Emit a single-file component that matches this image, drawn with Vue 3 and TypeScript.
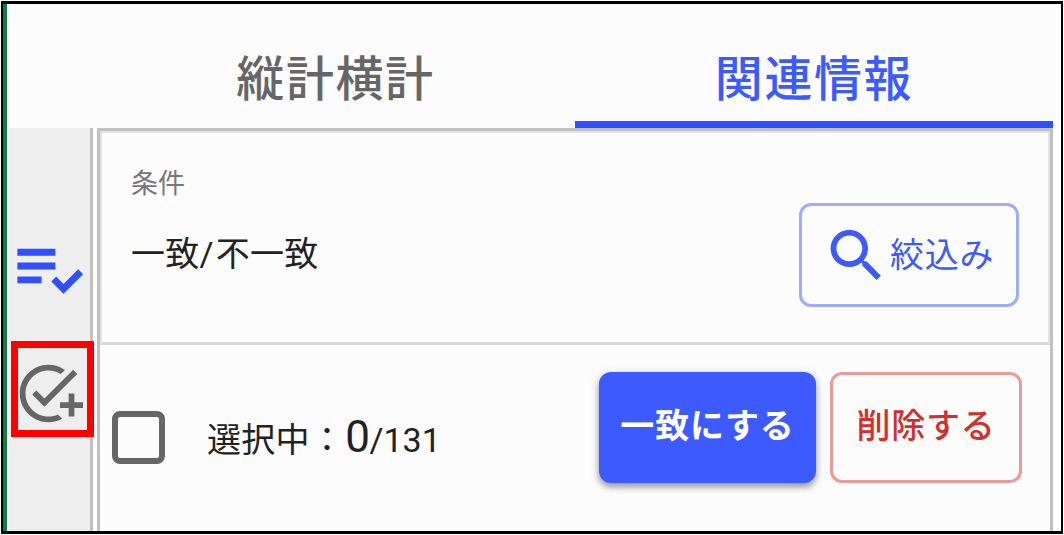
<template>
  <div class="window">
    <div class="tabs">
      <div
        v-for="(tab, index) in tabs"
        :key="index"
        class="tab"
        :class="{ active: index === activeTab }"
        @click="activeTab = index"
      >
        {{ tab }}
      </div>
    </div>

    <div class="content">
      <div class="sidebar">
        <svg class="list-icon" viewBox="0 0 24 24">
          <path d="M3 10h11v2H3zm0-4h11v2H3zm0 8h7v2H3zm17.59-2.07-4.25 4.24-2.12-2.12-1.41 1.41L16.34 19 22 13.34z" />
        </svg>
        <div class="task">
          <svg class="task-icon" viewBox="0 0 24 24">
            <path d="M22 5.18 10.59 16.6l-4.24-4.24 1.41-1.41 2.83 2.83 10-10L22 5.18zM12 20c-4.41 0-8-3.59-8-8s3.59-8 8-8c1.57 0 3.04.46 4.28 1.25l1.45-1.45C16.1 2.67 14.13 2 12 2 6.48 2 2 6.48 2 12s4.48 10 10 10c1.73 0 3.36-.44 4.78-1.22l-1.5-1.5c-1 .46-2.11.72-3.28.72zm7-5h-3v2h3v3h2v-3h3v-2h-3v-3h-2v3z" />
          </svg>
          <div class="marker"></div>
        </div>
      </div>

      <div class="panel">
        <div class="filter">
          <div class="condition">
            <div class="label">条件</div>
            <div class="value">一致<span class="slash">/</span>不一致</div>
          </div>
          <button class="btn search">
            <svg class="search-icon" viewBox="0 0 24 24">
              <path d="M15.5 14h-.79l-.28-.27C15.41 12.59 16 11.11 16 9.5 16 5.91 13.09 3 9.5 3S3 5.91 3 9.5 5.91 16 9.5 16c1.61 0 3.09-.59 4.23-1.57l.27.28v.79l5 4.99L20.49 19l-4.99-5zm-6 0C7.01 14 5 11.99 5 9.5S7.01 5 9.5 5 14 7.01 14 9.5 11.99 14 9.5 14z" />
            </svg>
            <span>絞込み</span>
          </button>
        </div>

        <div class="actions">
          <div class="checkbox" :class="{ checked: allChecked }" @click="allChecked = !allChecked"></div>
          <div class="count">選択中：<span class="selected">{{ selected }}</span><span class="total">/{{ total }}</span></div>
          <button class="btn match">一致にする</button>
          <button class="btn delete">削除する</button>
        </div>
      </div>
    </div>
  </div>
</template>

<script setup lang="ts">
import { ref, computed } from 'vue'

const tabs = ['縦計横計', '関連情報']
const activeTab = ref(1)
const total = 131
const allChecked = ref(false)

const selected = computed(() => (allChecked.value ? total : 0))
</script>

<style>
body {
  margin: 0;
  background: #fff;
}
</style>

<style scoped>
.window {
  box-sizing: border-box;
  display: flex;
  flex-direction: column;
  width: 1062px;
  height: 533px;
  margin: 1px;
  border: 3px solid #000;
  border-width: 3px 2px 3px 2px;
  background: linear-gradient(to right, #107c41 4px, #fff 4px);
  font-family: Roboto, 'Noto Sans CJK JP', sans-serif;
  color: #222;
  overflow: hidden;
}
.tabs {
  display: flex;
  flex: none;
  height: 124px;
  margin-left: 5px;
  margin-right: 8px;
  background: #fcfcfc;
  box-shadow: 8px 0 0 #fcfcfc;
}
.tab {
  box-sizing: border-box;
  width: 567px;
  padding-left: 88px;
  padding-top: 6px;
  text-align: center;
  font-size: 48px;
  font-weight: 500;
  line-height: 140px;
  letter-spacing: 1.6px;
  color: #666;
  cursor: pointer;
}
.tab.active {
  width: 478px;
  padding-left: 0;
  flex: none;
  color: #3d5afe;
  border-bottom: 7px solid #304ffe;
}
.content {
  display: flex;
  flex: 1;
  min-height: 0;
  margin-left: 6px;
}
.sidebar {
  box-sizing: border-box;
  width: 84px;
  border-right: 3px solid #c0c0c0;
  background: #eee;
}
.list-icon {
  display: block;
  width: 83px;
  height: 83px;
  margin: 99.5px 0 0 -2px;
  fill: #304ffe;
}
.task {
  position: relative;
  margin-top: 48px;
}
.task-icon {
  display: block;
  width: 69px;
  height: 69px;
  margin-left: 4.5px;
  fill: #666;
}
/* highlight frame drawn over the sidebar edge */
.marker {
  position: absolute;
  box-sizing: border-box;
  left: 2px;
  top: -17.5px;
  width: 83px;
  height: 96px;
  border: 7px solid #f00;
}
.panel {
  box-sizing: border-box;
  width: 956px;
  margin-left: 4px;
  border: 3px solid #c0c0c0;
  border-bottom: none;
  background: #fcfcfc;
}
.filter {
  box-sizing: border-box;
  display: flex;
  justify-content: space-between;
  height: 214px;
  padding: 70px 29px 0 29px;
  border: 2px solid #e2e2e2;
  border-bottom: 3px solid #d9d9d9;
}
.condition {
  margin-top: -37px;
}
.label {
  font-size: 27px;
  line-height: 36px;
  color: #777;
}
.value {
  margin-top: 28px;
  font-size: 34px;
  line-height: 48px;
  letter-spacing: 0.3px;
}
.slash {
  letter-spacing: 2px;
}
.btn {
  box-sizing: border-box;
  border-radius: 12px;
  background: transparent;
  font-family: inherit;
  font-size: 34px;
  letter-spacing: 0.8px;
  line-height: 48px;
  white-space: nowrap;
  cursor: pointer;
}
.search {
  display: flex;
  align-items: center;
  width: 220px;
  height: 104px;
  padding: 0 0 0 20px;
  border: 3px solid #9eacff;
  color: #3d5afe;
}
.search span {
  margin-left: -1px;
}
.search-icon {
  flex: none;
  width: 69px;
  height: 69px;
  fill: #3d5afe;
}
.actions {
  display: flex;
  align-items: flex-start;
  padding: 27px 28px 0 12px;
}
.checkbox {
  box-sizing: border-box;
  width: 53px;
  height: 53px;
  margin-top: 39px;
  border: 6px solid #666;
  border-radius: 8px;
  cursor: pointer;
}
.checkbox.checked {
  background: #3d5afe;
}
.count {
  margin: 41px auto 0 42px;
  font-size: 34px;
  line-height: 48px;
  letter-spacing: 0.3px;
  white-space: nowrap;
}
.selected {
  margin-left: 1px;
  font-size: 44px;
  letter-spacing: -0.5px;
}
.total {
  letter-spacing: 0;
}
.match {
  width: 217px;
  height: 111px;
  padding: 0 0 4px;
  border: none;
  background: #3d5afe;
  color: #fff;
  font-weight: 700;
  box-shadow: 0 4px 6px rgba(0, 0, 0, 0.35), 0 2px 12px rgba(0, 0, 0, 0.12);
}
.delete {
  width: 192px;
  height: 111px;
  margin-left: 14px;
  padding: 0 0 4px;
  border: 3px solid #eb9a9a;
  color: #d32f2f;
  font-weight: 500;
}
</style>
